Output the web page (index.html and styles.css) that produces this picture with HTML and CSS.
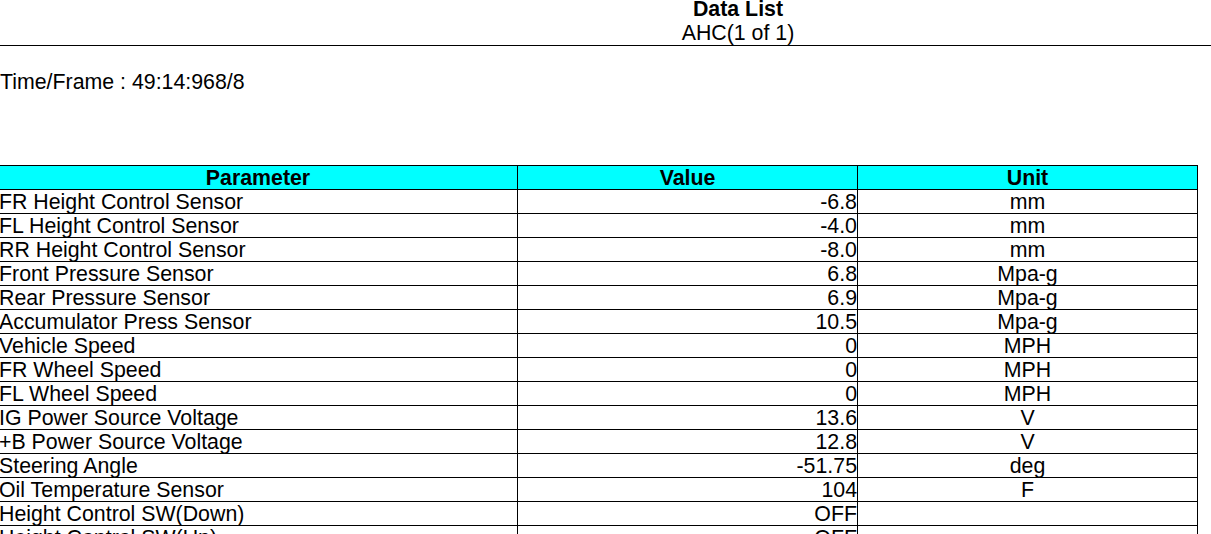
FILE: index.html
```html
<!DOCTYPE html>
<html>
<head>
<meta charset="utf-8">
<title>Data List</title>
<link rel="stylesheet" href="styles.css">
</head>
<body>
<div class="page">
  <header class="doc-header">
    <div class="title">Data List</div>
    <div class="subtitle">AHC(1 of 1)</div>
  </header>
  <div class="frame">Time/Frame : 49:14:968/8</div>
  <table class="data">
    <colgroup>
      <col class="c-param">
      <col class="c-value">
      <col class="c-unit">
    </colgroup>
    <thead>
      <tr><th>Parameter</th><th>Value</th><th>Unit</th></tr>
    </thead>
    <tbody>
      <tr><td>FR Height Control Sensor</td><td class="val">-6.8</td><td class="unit">mm</td></tr>
      <tr><td>FL Height Control Sensor</td><td class="val">-4.0</td><td class="unit">mm</td></tr>
      <tr><td>RR Height Control Sensor</td><td class="val">-8.0</td><td class="unit">mm</td></tr>
      <tr><td>Front Pressure Sensor</td><td class="val">6.8</td><td class="unit">Mpa-g</td></tr>
      <tr><td>Rear Pressure Sensor</td><td class="val">6.9</td><td class="unit">Mpa-g</td></tr>
      <tr><td>Accumulator Press Sensor</td><td class="val">10.5</td><td class="unit">Mpa-g</td></tr>
      <tr><td>Vehicle Speed</td><td class="val">0</td><td class="unit">MPH</td></tr>
      <tr><td>FR Wheel Speed</td><td class="val">0</td><td class="unit">MPH</td></tr>
      <tr><td>FL Wheel Speed</td><td class="val">0</td><td class="unit">MPH</td></tr>
      <tr><td>IG Power Source Voltage</td><td class="val">13.6</td><td class="unit">V</td></tr>
      <tr><td>+B Power Source Voltage</td><td class="val">12.8</td><td class="unit">V</td></tr>
      <tr><td>Steering Angle</td><td class="val">-51.75</td><td class="unit">deg</td></tr>
      <tr><td>Oil Temperature Sensor</td><td class="val">104</td><td class="unit">F</td></tr>
      <tr><td>Height Control SW(Down)</td><td class="val">OFF</td><td class="unit"></td></tr>
      <tr><td>Height Control SW(Up)</td><td class="val">OFF</td><td class="unit"></td></tr>
    </tbody>
  </table>
</div>
</body>
</html>
```

FILE: styles.css
```css
html, body {
  margin: 0;
  padding: 0;
  background: #ffffff;
  overflow: hidden;
}

body {
  font-family: "Liberation Sans", Arial, sans-serif;
  font-size: 21.33px;
  color: #000000;
}

.page {
  width: 1211px;
}

.doc-header {
  box-sizing: border-box;
  margin-top: -2px;
  width: 1211px;
  padding-left: 265px;
  text-align: center;
  line-height: 24px;
  border-bottom: 1px solid #000000;
}

.doc-header .title {
  font-weight: bold;
  line-height: 23px;
}

.frame {
  margin-top: 24px;
  line-height: 24px;
}

.data {
  margin-top: 71px;
  margin-left: -2px;
  border-collapse: collapse;
  table-layout: fixed;
  width: 1200px;
  font-size: 21.33px;
}

.c-param { width: 519px; }
.c-value { width: 340px; }
.c-unit  { width: 340px; }

.data th,
.data td {
  border: 1px solid #000000;
  padding: 2px 0 0 0;
  height: 21px;
  line-height: 21px;
  white-space: nowrap;
  overflow: hidden;
}

.data th {
  background: #00ffff;
  font-weight: bold;
  text-align: center;
}

.data td {
  text-align: left;
}

.data td.val {
  text-align: right;
}

.data td.unit {
  text-align: center;
}
```
